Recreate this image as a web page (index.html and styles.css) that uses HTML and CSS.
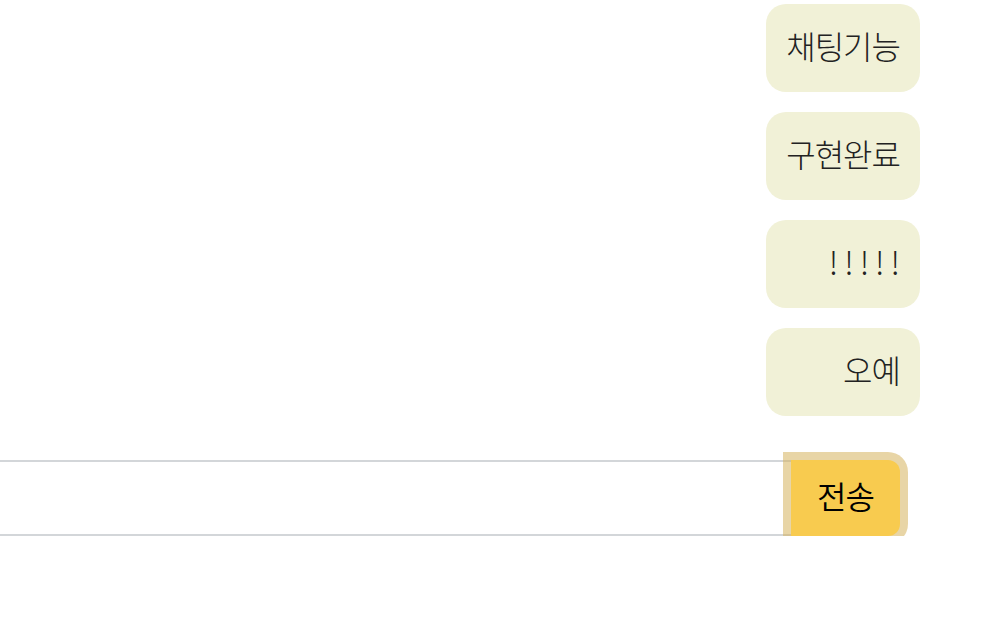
FILE: index.html
```html
<!DOCTYPE html>
<html lang="ko">
<head>
<meta charset="utf-8">
<title>채팅</title>
<link rel="stylesheet" href="styles.css">
</head>
<body>
<div class="chat">
  <ul class="messages">
    <li class="bubble">채팅기능</li>
    <li class="bubble">구현완료</li>
    <li class="bubble bubble-wide">!!!!!</li>
    <li class="bubble">오예</li>
  </ul>
  <form class="composer">
    <input class="field" type="text" aria-label="메시지">
    <button class="send" type="button">전송</button>
  </form>
</div>
</body>
</html>
```
FILE: styles.css
```css
html, body {
  margin: 0;
  padding: 0;
  background: #ffffff;
}
body {
  font-family: "Noto Sans CJK KR", "Noto Sans", sans-serif;
  color: #222222;
  overflow: hidden;
}
.chat {
  display: flex;
  flex-direction: column;
  padding-top: 4px;
}
.messages {
  list-style: none;
  margin: 0 88px 0 0;
  padding: 0;
  align-self: flex-end;
  display: flex;
  flex-direction: column;
  gap: 20px;
}
.bubble {
  background: #f1f1d7;
  border-radius: 20px;
  padding: 0 20px 6px;
  height: 88px;
  box-sizing: border-box;
  display: flex;
  align-items: center;
  justify-content: flex-end;
  font-size: 32px;
  font-weight: 300;
  letter-spacing: -1px;
}
.bubble-wide {
  letter-spacing: 6px;
  padding-right: 14px;
}
.composer {
  display: flex;
  margin: 44px 108px 0 -2px;
  height: 76px;
}
.field {
  flex: 1;
  margin: 0;
  border: 2px solid #d3d6d9;
  border-right: none;
  outline: none;
  background: #fff;
  box-sizing: border-box;
  height: 76px;
}
.send {
  width: 109px;
  height: 76px;
  margin: 0;
  border: none;
  border-radius: 0 12px 12px 0;
  background: #f8cb4f;
  color: #000;
  font-family: "Noto Sans CJK KR", "Noto Sans", sans-serif;
  font-size: 32px;
  font-weight: 350;
  letter-spacing: -1px;
  box-shadow: 0 0 0 8px rgba(214, 178, 92, 0.55);
  padding: 0 0 6px;
}
```
